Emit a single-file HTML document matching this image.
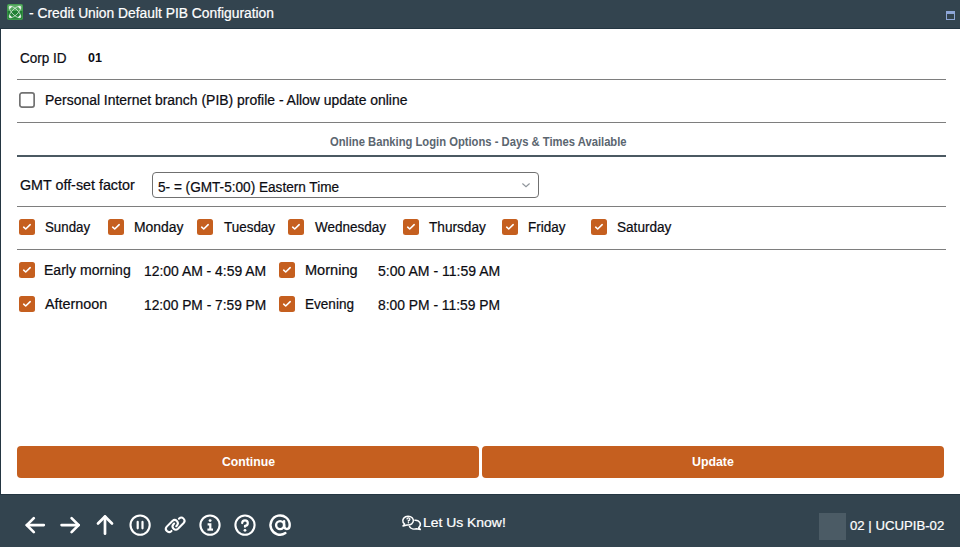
<!DOCTYPE html>
<html lang="en">
<head>
<meta charset="utf-8">
<title>Credit Union Default PIB Configuration</title>
<style>
*{box-sizing:border-box;margin:0;padding:0}
html,body{width:960px;height:547px;overflow:hidden;background:#fff}
body{font-family:"Liberation Sans",Arial,sans-serif;color:#111;position:relative}
.abs{position:absolute;white-space:nowrap}
.t{position:absolute;white-space:nowrap;font-size:14px;line-height:16px;color:#0c0c12;transform-origin:0 50%;-webkit-text-stroke:0.22px currentColor}
#titlebar{left:0;top:0;width:960px;height:28px;background:#33444f}
#leftb{left:0;top:28px;width:1px;height:467px;background:#243642}
#topb{left:0;top:28px;width:960px;height:1px;background:#243642}
#botb{left:0;top:494px;width:960px;height:1px;background:#243642}
.hr{position:absolute;left:17px;width:929px;height:1px;background:#7e7e7e}
.cb{position:absolute;width:16px;height:16px;border-radius:2.5px}
.cb.off{background:#fff}
.cb.on{background:#c55f1f}
.cb.on svg{position:absolute;left:0;top:0}
#footer{left:0;top:495px;width:960px;height:52px;background:#33444f}
.btn{position:absolute;top:446px;height:32px;background:#c55f1f;border-radius:4px;color:#fff;font-weight:bold;font-size:13px;line-height:31px;text-align:center}
</style>
</head>
<body>
<div class="abs" id="titlebar"></div>
<div class="abs" id="leftb"></div><div class="abs" id="topb"></div><div class="abs" id="botb"></div>
<svg class="abs" style="left:7px;top:4px" width="16" height="16" viewBox="0 0 16 16">
  <defs><linearGradient id="g" x1="0" y1="0" x2="0" y2="1"><stop offset="0" stop-color="#63b06c"/><stop offset="0.41" stop-color="#4aa356"/><stop offset="0.42" stop-color="#1d7d31"/><stop offset="1" stop-color="#2d8c3f"/></linearGradient></defs>
  <rect x="0" y="0" width="16" height="16" rx="1.8" fill="#3f9a4c"/>
  <rect x="0.7" y="0.7" width="14.6" height="14.6" rx="1.2" fill="url(#g)"/>
  <g fill="none" stroke="#fff" stroke-width="0.8" opacity="0.75">
    <ellipse cx="8" cy="8" rx="7.6" ry="2.9" transform="rotate(45 8 8)"/>
    <ellipse cx="8" cy="8" rx="7.6" ry="2.9" transform="rotate(-45 8 8)"/>
  </g>
  <g fill="#fff"><path d="M2.2 2.2 L5.2 2.6 L2.6 5.2 Z"/><path d="M13.8 2.2 L10.8 2.6 L13.4 5.2 Z"/><path d="M2.2 13.8 L5.2 13.4 L2.6 10.8 Z"/><path d="M13.8 13.8 L10.8 13.4 L13.4 10.8 Z"/></g>
</svg>
<svg class="abs" style="left:946px;top:11px" width="9" height="9" viewBox="0 0 9 9"><rect x="0.5" y="0.5" width="8" height="8" fill="none" stroke="#8ea6d8"/><rect x="0" y="0" width="9" height="3" fill="#8ea6d8"/></svg>

<div class="hr" style="top:79px"></div>

<div class="cb off" style="left:19px;top:92px"><svg width="16" height="16" viewBox="0 0 16 16"><rect x="0.85" y="0.85" width="14.3" height="14.3" rx="2.2" fill="#fff" stroke="#727272" stroke-width="1.7"/></svg></div>
<div class="hr" style="top:122px"></div>

<div class="hr" style="top:155px;height:2px;background:#4b5962"></div>

<div class="abs" id="sel" style="left:152px;top:172px;width:387px;height:26px;border:1px solid #707070;border-radius:4px;background:#fff"></div>
<svg class="abs" style="left:521px;top:182px" width="10" height="7" viewBox="0 0 10 7"><path d="M1.4 1.5 L5 4.7 L8.6 1.5" fill="none" stroke="#8f959b" stroke-width="1.15"/></svg>
<div class="hr" style="top:206px"></div>

<div class="cb on" style="left:19px;top:219px"><svg width="16" height="16" viewBox="0 0 16 16"><path d="M4.7 8.2 L6.7 10.0 L11.2 5.7" fill="none" stroke="#fff" stroke-width="1.6" stroke-linecap="round" stroke-linejoin="round"/></svg></div>
<div class="cb on" style="left:108px;top:219px"><svg width="16" height="16" viewBox="0 0 16 16"><path d="M4.7 8.2 L6.7 10.0 L11.2 5.7" fill="none" stroke="#fff" stroke-width="1.6" stroke-linecap="round" stroke-linejoin="round"/></svg></div>
<div class="cb on" style="left:197px;top:219px"><svg width="16" height="16" viewBox="0 0 16 16"><path d="M4.7 8.2 L6.7 10.0 L11.2 5.7" fill="none" stroke="#fff" stroke-width="1.6" stroke-linecap="round" stroke-linejoin="round"/></svg></div>
<div class="cb on" style="left:288px;top:219px"><svg width="16" height="16" viewBox="0 0 16 16"><path d="M4.7 8.2 L6.7 10.0 L11.2 5.7" fill="none" stroke="#fff" stroke-width="1.6" stroke-linecap="round" stroke-linejoin="round"/></svg></div>
<div class="cb on" style="left:403px;top:219px"><svg width="16" height="16" viewBox="0 0 16 16"><path d="M4.7 8.2 L6.7 10.0 L11.2 5.7" fill="none" stroke="#fff" stroke-width="1.6" stroke-linecap="round" stroke-linejoin="round"/></svg></div>
<div class="cb on" style="left:502px;top:219px"><svg width="16" height="16" viewBox="0 0 16 16"><path d="M4.7 8.2 L6.7 10.0 L11.2 5.7" fill="none" stroke="#fff" stroke-width="1.6" stroke-linecap="round" stroke-linejoin="round"/></svg></div>
<div class="cb on" style="left:591px;top:219px"><svg width="16" height="16" viewBox="0 0 16 16"><path d="M4.7 8.2 L6.7 10.0 L11.2 5.7" fill="none" stroke="#fff" stroke-width="1.6" stroke-linecap="round" stroke-linejoin="round"/></svg></div>
<div class="hr" style="top:249px"></div>

<div class="cb on" style="left:19px;top:262px"><svg width="16" height="16" viewBox="0 0 16 16"><path d="M4.7 8.2 L6.7 10.0 L11.2 5.7" fill="none" stroke="#fff" stroke-width="1.6" stroke-linecap="round" stroke-linejoin="round"/></svg></div>
<div class="cb on" style="left:279px;top:262px"><svg width="16" height="16" viewBox="0 0 16 16"><path d="M4.7 8.2 L6.7 10.0 L11.2 5.7" fill="none" stroke="#fff" stroke-width="1.6" stroke-linecap="round" stroke-linejoin="round"/></svg></div>

<div class="cb on" style="left:19px;top:296px"><svg width="16" height="16" viewBox="0 0 16 16"><path d="M4.7 8.2 L6.7 10.0 L11.2 5.7" fill="none" stroke="#fff" stroke-width="1.6" stroke-linecap="round" stroke-linejoin="round"/></svg></div>
<div class="cb on" style="left:279px;top:296px"><svg width="16" height="16" viewBox="0 0 16 16"><path d="M4.7 8.2 L6.7 10.0 L11.2 5.7" fill="none" stroke="#fff" stroke-width="1.6" stroke-linecap="round" stroke-linejoin="round"/></svg></div>

<div class="btn" style="left:17px;width:462px"></div>
<div class="btn" style="left:482px;width:462px"></div>

<div class="abs" id="footer"></div>
<div class="abs" style="left:819px;top:513px;width:27px;height:27px;background:#4b5b65"></div>
<!--FOOTSVG--><svg class="abs" style="left:0;top:494px" width="960" height="53" viewBox="0 494 960 53">
<g transform="translate(22.60 512.30) scale(0.1)" fill="none" stroke="#fff" stroke-width="27" stroke-linecap="round" stroke-linejoin="round"><line x1="212" y1="128" x2="42" y2="128"/><polyline points="112 58 42 128 112 198"/></g>
<g transform="translate(57.20 512.30) scale(0.1)" fill="none" stroke="#fff" stroke-width="27" stroke-linecap="round" stroke-linejoin="round"><line x1="44" y1="128" x2="214" y2="128"/><polyline points="144 58 214 128 144 198"/></g>
<g transform="translate(92.20 512.30) scale(0.1)" fill="none" stroke="#fff" stroke-width="27" stroke-linecap="round" stroke-linejoin="round"><line x1="128" y1="214" x2="128" y2="42"/><polyline points="58 112 128 42 198 112"/></g>
<g transform="translate(127.30 512.30) scale(0.1)" fill="none" stroke="#fff" stroke-width="22" stroke-linecap="round" stroke-linejoin="round"><circle cx="128" cy="128" r="96" stroke-width="21"/><line x1="104" y1="96" x2="104" y2="160"/><line x1="152" y1="96" x2="152" y2="160"/></g>
<g fill="none" stroke="#fff" stroke-width="2.05" stroke-linecap="round" stroke-linejoin="round"><path d="M171.47 530.95 L171.26 531.16 A3.2 3.2 0 0 1 166.74 526.64 L172.44 520.94 A3.2 3.2 0 0 1 176.96 525.46 L176.26 526.17"/><path d="M178.93 518.75 L179.14 518.54 A3.2 3.2 0 0 1 183.66 523.06 L177.96 528.76 A3.2 3.2 0 0 1 173.44 524.24 L174.14 523.53"/></g>
<g transform="translate(197.20 512.30) scale(0.1)" fill="none" stroke="#fff" stroke-width="24" stroke-linecap="round" stroke-linejoin="round"><circle cx="128" cy="128" r="96" stroke-width="21"/></g>
<g fill="none" stroke="#fff" stroke-width="2.2" stroke-linecap="butt" stroke-linejoin="miter"><path d="M207.6 524.3 H210.3 V529.6"/><path d="M207.4 529.6 H213"/></g><circle cx="210.1" cy="520.6" r="1.45" fill="#fff"/>
<g transform="translate(232.20 512.30) scale(0.1)" fill="none" stroke="#fff" stroke-width="24" stroke-linecap="round" stroke-linejoin="round"><circle cx="128" cy="128" r="96" stroke-width="21"/><path d="M128,144v-8a28,28,0,1,0-28-28" stroke-width="22"/><circle cx="128" cy="180" r="14" fill="#fff" stroke="none"/></g>
<g transform="translate(267.30 512.30) scale(0.1)" fill="none" stroke="#fff" stroke-width="24" stroke-linecap="round" stroke-linejoin="round"><circle cx="128" cy="128" r="40"/><path d="M181.1,208A96,96,0,1,1,224,128c0,22.1-8,40-28,40s-28-17.900-28-40V88"/></g>
<g fill="none" stroke="#fff" stroke-width="1.5" stroke-linecap="round" stroke-linejoin="round">
<path d="M404.6 524.0 A5.3 4.45 0 1 1 407.0 525.0 L403.0 525.9 Z"/>
<path d="M414.9 520.2 A5.0 4.2 0 0 1 418.7 527.5 L420.3 529.4 L416.6 528.7 A5.4 4.2 0 0 1 409.5 526.6"/>
</g>
<g fill="none" stroke="#fff" stroke-width="1.3" stroke-linecap="round"><path d="M407.0 518.9 A1.45 1.35 0 1 1 408.4 520.5 V521.2"/></g><circle cx="408.4" cy="522.7" r="0.8" fill="#fff"/>
</svg><!--/FOOTSVG-->
<div class="t" id="title" style="left:28.64px;top:5px;transform:scaleX(0.9869);color:#fff">- Credit Union Default PIB Configuration</div>
<div class="t" id="corp" style="left:19.79px;top:50px;transform:scaleX(0.9661);">Corp ID</div>
<div class="t" id="corpv" style="left:87.71px;top:50px;transform:scaleX(1.0433);font-weight:bold;font-size:12px;-webkit-text-stroke:0">01</div>
<div class="t" id="pib" style="left:44.93px;top:92px;transform:scaleX(0.9952);">Personal Internet branch (PIB) profile - Allow update online</div>
<div class="t" id="hdr" style="left:329.63px;top:134px;transform:scaleX(0.9358);font-size:12px;font-weight:bold;color:#5b6670;-webkit-text-stroke:0">Online Banking Login Options - Days &amp; Times Available</div>
<div class="t" id="gmt" style="left:19.84px;top:177px;transform:scaleX(1.0213);">GMT off-set factor</div>
<div class="t" id="selt" style="left:157.78px;top:179px;transform:scaleX(0.9719);">5- = (GMT-5:00) Eastern Time</div>
<div class="t" id="d1" style="left:44.74px;top:219px;transform:scaleX(0.9489);">Sunday</div>
<div class="t" id="d2" style="left:134.15px;top:219px;transform:scaleX(0.9942);">Monday</div>
<div class="t" id="d3" style="left:223.68px;top:219px;transform:scaleX(0.9603);">Tuesday</div>
<div class="t" id="d4" style="left:314.52px;top:219px;transform:scaleX(0.9638);">Wednesday</div>
<div class="t" id="d5" style="left:429.43px;top:219px;transform:scaleX(0.9732);">Thursday</div>
<div class="t" id="d6" style="left:527.86px;top:219px;transform:scaleX(0.9616);">Friday</div>
<div class="t" id="d7" style="left:616.73px;top:219px;transform:scaleX(0.9706);">Saturday</div>
<div class="t" id="p1" style="left:44.43px;top:262px;transform:scaleX(1.0039);">Early morning</div>
<div class="t" id="p1t" style="left:144.18px;top:263px;transform:scaleX(0.9932);">12:00 AM - 4:59 AM</div>
<div class="t" id="p2" style="left:304.80px;top:262px;transform:scaleX(1.0392);">Morning</div>
<div class="t" id="p2t" style="left:378.19px;top:263px;transform:scaleX(1.0022);">5:00 AM - 11:59 AM</div>
<div class="t" id="p3" style="left:45.39px;top:296px;transform:scaleX(1.0258);">Afternoon</div>
<div class="t" id="p3t" style="left:144.19px;top:297px;transform:scaleX(0.9815);">12:00 PM - 7:59 PM</div>
<div class="t" id="p4" style="left:304.86px;top:296px;transform:scaleX(0.9679);">Evening</div>
<div class="t" id="p4t" style="left:378.40px;top:297px;transform:scaleX(0.9886);">8:00 PM - 11:59 PM</div>
<div class="t" id="cont" style="left:221.77px;top:454px;transform:scaleX(0.9400);color:#fff;font-weight:bold;font-size:13px;-webkit-text-stroke:0">Continue</div>
<div class="t" id="upd" style="left:691.54px;top:454px;transform:scaleX(0.9496);color:#fff;font-weight:bold;font-size:13px;-webkit-text-stroke:0">Update</div>
<div class="t" id="luk" style="left:423.25px;top:515px;transform:scaleX(1.0465);color:#fff;font-size:13.3px">Let Us Know!</div>
<div class="t" id="ws" style="left:849.68px;top:518px;transform:scaleX(0.9912);color:#fff;font-size:13.3px">02 | UCUPIB-02</div>
</body>
</html>
